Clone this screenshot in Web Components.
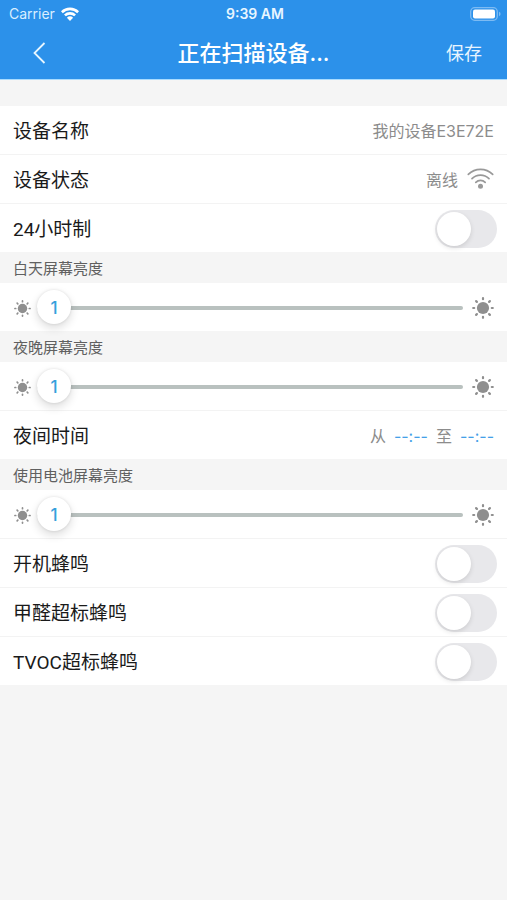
<!DOCTYPE html>
<html lang="zh-CN">
<head>
<meta charset="utf-8">
<meta name="viewport" content="width=device-width, initial-scale=1">
<title>正在扫描设备...</title>
<style>
  body {
    margin: 0;
    background: #f5f5f5;
    color: #1a1a1a;
    font-family: Roboto, "Noto Sans CJK SC", sans-serif;
  }
</style>
</head>
<body>
<settings-page></settings-page>

<script>
const define = (name, html, setup) => {
  const template = document.createElement('template');
  template.innerHTML = html;
  customElements.define(name, class extends HTMLElement {
    constructor() {
      super();
      this.attachShadow({ mode: 'open' }).append(template.content.cloneNode(true));
    }
    connectedCallback() {
      if (setup) setup(this, this.shadowRoot);
    }
  });
};

define('status-bar', `
  <style>
    :host { display: grid; grid-template-columns: 1fr auto 1fr; align-items: center; height: 27px; padding: 0 6px 0 9px; font-size: 14px; line-height: 20px; }
    .carrier { display: flex; align-items: center; gap: 6px; font-family: Inter, sans-serif; color: #d9eeff; }
    .time { font-family: Inter, sans-serif; font-weight: 600; color: #e8f6ff; }
    .battery { justify-self: end; }
    svg { display: block; }
  </style>
  <div class="carrier"><span>Carrier</span>
    <svg width="18" height="14" viewBox="0 0 18 14" fill="none" stroke="#fff" stroke-width="2.6" aria-hidden="true">
      <path d="M.9 5.2a11.6 11.6 0 0 1 16.2 0M3.9 8.4a7.4 7.4 0 0 1 10.2 0"/>
      <path d="M9 14 5.9 10.8a4.5 4.5 0 0 1 6.2 0z" fill="#fff" stroke="none"/>
    </svg>
  </div>
  <span class="time">9:39 AM</span>
  <svg class="battery" width="31" height="14" viewBox="0 0 31 14" aria-hidden="true">
    <rect x=".7" y=".7" width="26.6" height="12.6" rx="4" fill="none" stroke="#7dbbf3" stroke-width="1.3"/>
    <rect x="3" y="2.5" width="22" height="9" rx="2" fill="#fff"/>
    <path d="M29 4.8q1.6.6 1.6 2.2T29 9.2z" fill="#7dbbf3"/>
  </svg>`);

define('nav-bar', `
  <style>
    :host { display: grid; grid-template-columns: 1fr auto 1fr; align-items: center; height: 52px; padding: 0 25px; border-bottom: 1px solid #a9dcff; }
    button { display: block; padding: 0; border: 0; background: none; color: #e8f5ff; font: inherit; cursor: pointer; }
    .back { padding: 4px 7px; justify-self: start; }
    .save { justify-self: end; padding-top: 2px; font-size: 18px; line-height: 26px; }
    h1 { margin: 0; font: 500 22px/30px Inter, "Noto Sans CJK SC", sans-serif; color: #fff; }
    svg { display: block; }
  </style>
  <button class="back" aria-label="返回">
    <svg width="14" height="22" viewBox="0 0 14 22" fill="none" stroke="#e8f6ff" stroke-width="1.8" aria-hidden="true"><path d="M12.5 1 2.5 11l10 10"/></svg>
  </button>
  <h1><slot></slot></h1>
  <button class="save">保存</button>`);

define('setting-row', `
  <style>
    :host { display: flex; align-items: center; justify-content: space-between; height: 46px; padding: 2px 13px 0; background: #fff; font-size: 19px; line-height: 26px; }
    :host([divided]) { border-bottom: 1px solid #f3f3f3; }
    .name { padding-top: 2px; }
    .value { display: flex; align-items: center; gap: 9px; font: 16px/24px Inter, "Noto Sans CJK SC", sans-serif; color: #8c8c8c; }
  </style>
  <span class="name"><slot></slot></span>
  <span class="value"><slot name="value"></slot></span>`);

define('switch-row', `
  <style>
    :host { display: block; background: #fff; }
    :host([divided]) { border-bottom: 1px solid #f3f3f3; }
    label { display: flex; align-items: center; justify-content: space-between; height: 46px; padding: 2px 10px 0 13px; font-size: 19px; line-height: 26px; }
    span { padding-top: 2px; }
    input { appearance: none; display: flex; align-items: center; width: 62px; height: 38px; margin: 0; padding: 0 2px; box-sizing: border-box; border-radius: 19px; background: #e8e8eb; cursor: pointer; }
    input::before { content: ""; width: 34px; height: 34px; border-radius: 50%; background: #fff; box-shadow: 0 2px 5px #0000001f; }
    input:checked { justify-content: flex-end; background: #2c91ea; }
  </style>
  <label><span><slot></slot></span><input type="checkbox" role="switch"></label>`,
  (host, root) => root.querySelector('input').setAttribute('aria-label', host.textContent.trim()));

define('section-title', `
  <style>
    :host { display: flex; align-items: center; height: 29px; padding: 2px 13px 0; font-size: 15px; line-height: 22px; color: #606060; }
    h2 { margin: 0; font: inherit; }
  </style>
  <h2><slot></slot></h2>`);

define('sun-icon', `
  <style>:host { display: block; width: 17px; height: 17px; } :host([large]) { width: 22px; height: 22px; } svg { display: block; width: 100%; height: 100%; }</style>
  <svg viewBox="0 0 22 22" fill="#8f8f8f" stroke="#8f8f8f" stroke-width="2.2" stroke-linecap="round" aria-hidden="true">
    <circle cx="11" cy="11" r="6.1" stroke="none"/>
    <path d="M11 1.2v1M11 19.8v1M1.2 11h1M19.8 11h1M4.1 4.1l.8.8M17.1 17.1l.8.8M17.9 4.1l-.8.8M4.9 17.1l-.8.8"/>
  </svg>`);

define('brightness-slider', `
  <style>
    :host { display: flex; align-items: center; height: 46px; padding: 2px 13px 0 14px; background: #fff; }
    :host([divided]) { border-bottom: 1px solid #f3f3f3; }
    .control { position: relative; flex: 1; display: flex; margin: 0 9px 0 6px; }
    input { appearance: none; width: 100%; height: 34px; margin: 0; background: none; cursor: pointer; }
    input::-webkit-slider-runnable-track { height: 4px; border-radius: 2px; background: #b9c1bf; }
    input::-webkit-slider-thumb { appearance: none; width: 34px; height: 34px; margin-top: -16px; border-radius: 50%; background: #fff; box-shadow: 0 4px 10px #00000024, 0 0 3px #0000001c; }
    output { position: absolute; top: 0; left: calc((100% - 34px) * var(--ratio, 0)); width: 34px; height: 34px; text-align: center; font: 500 17px/34px Inter, sans-serif; color: #36a0dc; pointer-events: none; }
  </style>
  <sun-icon></sun-icon>
  <div class="control"><input id="level" type="range" min="1" max="8" value="1"><output for="level">1</output></div>
  <sun-icon large></sun-icon>`,
  (host, root) => {
    const input = root.querySelector('input');
    const output = root.querySelector('output');
    input.setAttribute('aria-label', host.getAttribute('label'));
    input.oninput = () => {
      output.textContent = input.value;
      output.style.setProperty('--ratio', (input.value - 1) / 7);
    };
  });

define('time-range', `
  <style>
    :host { display: flex; align-items: center; gap: 8px; }
    button { padding: 0; border: 0; background: none; color: #459fe8; font: 16px/24px Inter, sans-serif; cursor: pointer; }
  </style>
  <span>从</span><button aria-label="开始时间">--:--</button>
  <span>至</span><button aria-label="结束时间">--:--</button>`);

define('wifi-icon', `
  <style>:host { display: block; margin-bottom: 2px; } svg { display: block; }</style>
  <svg width="27" height="22" viewBox="0 0 27 22" fill="none" stroke="#999" stroke-width="1.7" stroke-linecap="round" aria-hidden="true">
    <path d="M1.3 6.4a17.3 17.3 0 0 1 24.4 0M5 10.6a12 12 0 0 1 17 0M8.8 14.4a6.7 6.7 0 0 1 9.4 0"/>
    <circle cx="13.5" cy="18.2" r="2.5" fill="#999" stroke="none"/>
  </svg>`);

define('settings-page', `
  <style>
    :host { display: block; }
    header { background: #2c91ea; }
    main { padding-top: 26px; }
  </style>
  <header>
    <status-bar></status-bar>
    <nav-bar>正在扫描设备...</nav-bar>
  </header>
  <main>
    <setting-row divided>设备名称<span slot="value">我的设备E3E72E</span></setting-row>
    <setting-row divided>设备状态<span slot="value">离线</span><wifi-icon slot="value"></wifi-icon></setting-row>
    <switch-row>24小时制</switch-row>
    <section-title>白天屏幕亮度</section-title>
    <brightness-slider label="白天屏幕亮度"></brightness-slider>
    <section-title>夜晚屏幕亮度</section-title>
    <brightness-slider label="夜晚屏幕亮度" divided></brightness-slider>
    <setting-row>夜间时间<time-range slot="value"></time-range></setting-row>
    <section-title>使用电池屏幕亮度</section-title>
    <brightness-slider label="使用电池屏幕亮度" divided></brightness-slider>
    <switch-row divided>开机蜂鸣</switch-row>
    <switch-row divided>甲醛超标蜂鸣</switch-row>
    <switch-row>TVOC超标蜂鸣</switch-row>
  </main>`);
</script>
</body>
</html>
